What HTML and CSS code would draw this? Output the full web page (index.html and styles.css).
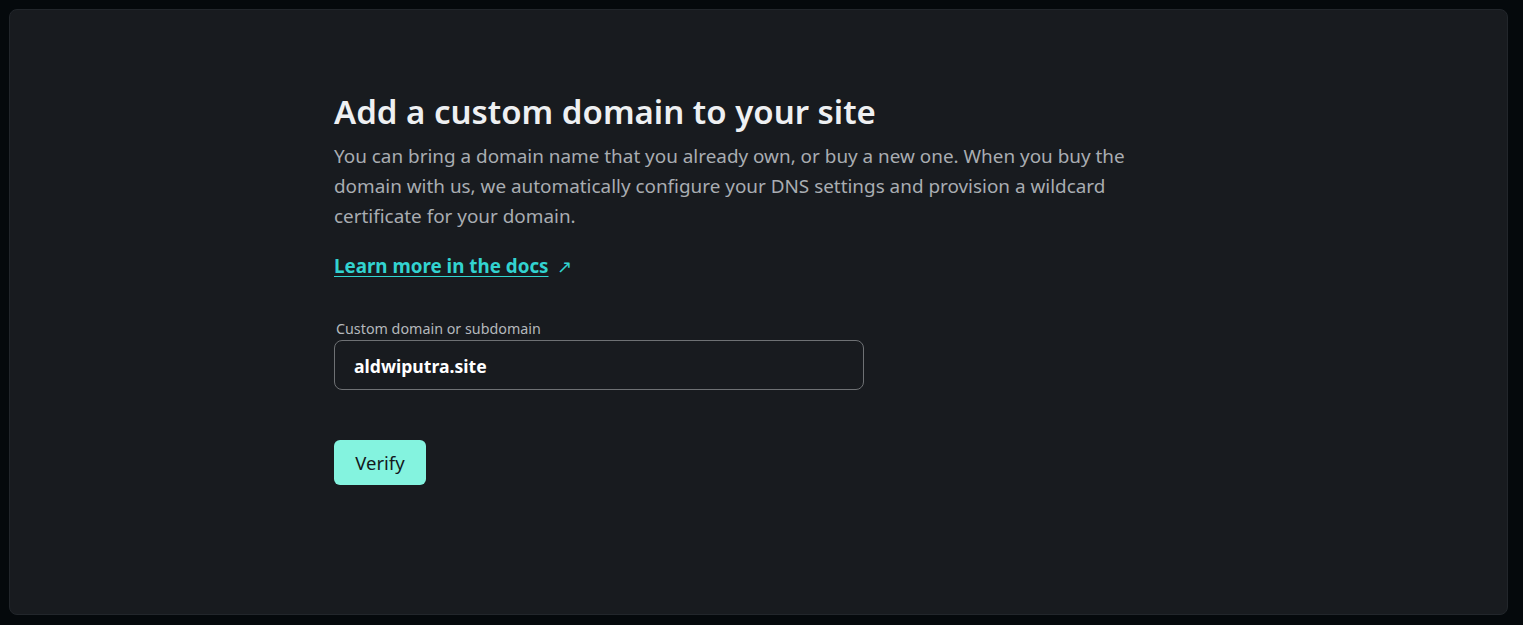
FILE: index.html
```html
<!DOCTYPE html>
<html>
<head>
<meta charset="utf-8">
<link rel="stylesheet" href="styles.css">
</head>
<body>
<main class="card">
  <section class="content">
    <h1 class="title">Add a custom domain to your site</h1>
    <p class="desc">You can bring a domain name that you already own, or buy a new one. When you buy the domain with us, we automatically configure your DNS settings and provision a wildcard certificate for your domain.</p>
    <p class="docs"><a class="docs-link" href="#">Learn more in the docs</a><span class="arrow">↗</span></p>
    <form class="form">
      <label class="label" for="domain">Custom domain or subdomain</label>
      <input class="input" id="domain" type="text" value="aldwiputra.site">
      <button class="btn" type="button">Verify</button>
    </form>
  </section>
</main>
</body>
</html>
```
FILE: styles.css
```css
html, body {
  margin: 0;
  height: 100%;
}
body {
  background: #05090c;
  padding: 9px 15px 10px 9px;
  box-sizing: border-box;
  font-family: "Noto Sans", "Open Sans", sans-serif;
}
.card {
  height: 100%;
  box-sizing: border-box;
  background: #181b1f;
  border: 1px solid #22262b;
  border-radius: 8px;
  padding: 82px 0 0 324px;
}
.content {
  width: 830px;
}
.title {
  margin: 0;
  font-size: 33px;
  font-weight: 600;
  line-height: 40px;
  color: #eef0f2;
}
.desc {
  margin: 9px 0 0;
  font-size: 18.9px;
  line-height: 30px;
  color: #a9adb2;
}
.docs {
  margin: 20px 0 0;
  font-size: 18.8px;
  line-height: 30px;
}
.docs-link {
  color: #32d3d0;
  font-weight: 700;
  text-decoration: underline;
  text-underline-offset: 3px;
}
.arrow {
  color: #32d3d0;
  margin-left: 8px;
  font-size: 18px;
}
.form {
  display: flex;
  flex-direction: column;
  align-items: flex-start;
  margin-top: 39px;
}
.label {
  font-size: 14.3px;
  line-height: 18px;
  color: #b4b8bc;
  margin-left: 2px;
  margin-bottom: 2px;
}
.input {
  width: 530px;
  height: 50px;
  box-sizing: border-box;
  background: #181b1f;
  border: 1px solid #6e7174;
  border-radius: 8px;
  padding: 2px 19px 0;
  font-family: inherit;
  font-size: 17.6px;
  font-weight: 700;
  color: #ffffff;
  outline: none;
}
.btn {
  margin-top: 50px;
  width: 92px;
  height: 45px;
  background: #84f3df;
  border: none;
  border-radius: 6px;
  font-family: inherit;
  font-size: 18.5px;
  color: #14191d;
  cursor: pointer;
}
```
